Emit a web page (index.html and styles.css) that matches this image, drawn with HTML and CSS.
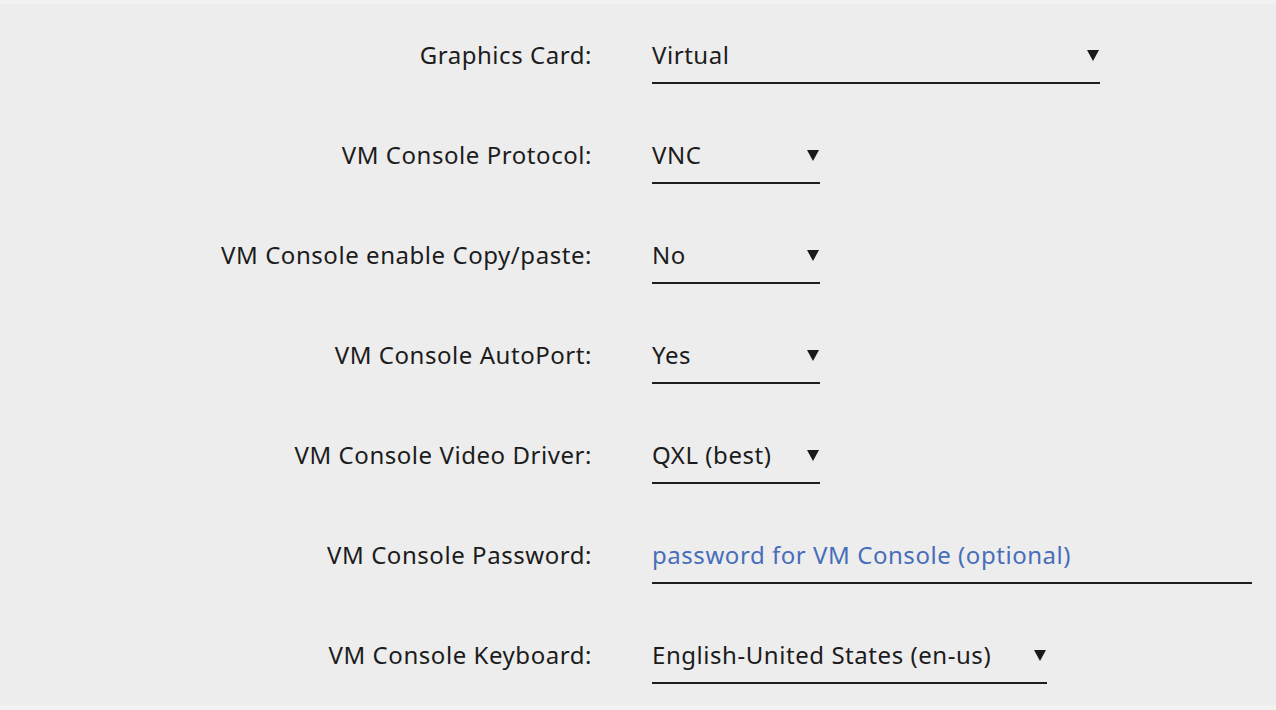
FILE: index.html
```html
<!DOCTYPE html>
<html>
<head>
<meta charset="utf-8">
<link rel="stylesheet" href="styles.css">
</head>
<body>
<div class="panel">
  <div class="row">
    <div class="label">Graphics Card:</div>
    <div class="control select w-graphics"><span>Virtual</span><svg class="caret" viewBox="0 0 12 12"><polygon points="0,1 12,1 6,12"/></svg></div>
  </div>
  <div class="row">
    <div class="label">VM Console Protocol:</div>
    <div class="control select w-short"><span>VNC</span><svg class="caret" viewBox="0 0 12 12"><polygon points="0,1 12,1 6,12"/></svg></div>
  </div>
  <div class="row">
    <div class="label">VM Console enable Copy/paste:</div>
    <div class="control select w-short"><span>No</span><svg class="caret" viewBox="0 0 12 12"><polygon points="0,1 12,1 6,12"/></svg></div>
  </div>
  <div class="row">
    <div class="label">VM Console AutoPort:</div>
    <div class="control select w-short"><span>Yes</span><svg class="caret" viewBox="0 0 12 12"><polygon points="0,1 12,1 6,12"/></svg></div>
  </div>
  <div class="row">
    <div class="label">VM Console Video Driver:</div>
    <div class="control select w-short"><span>QXL (best)</span><svg class="caret" viewBox="0 0 12 12"><polygon points="0,1 12,1 6,12"/></svg></div>
  </div>
  <div class="row">
    <div class="label">VM Console Password:</div>
    <div class="control input w-pass"><span class="placeholder">password for VM Console (optional)</span></div>
  </div>
  <div class="row">
    <div class="label">VM Console Keyboard:</div>
    <div class="control select w-kbd"><span>English-United States (en-us)</span><svg class="caret" viewBox="0 0 12 12"><polygon points="0,1 12,1 6,12"/></svg></div>
  </div>
</div>
</body>
</html>
```
FILE: styles.css
```css
html, body {
  margin: 0;
  padding: 0;
  background: #f2f2f2;
}
body {
  font-family: "Noto Sans", "Open Sans", sans-serif;
  font-size: 24px;
  letter-spacing: 0.55px;
  color: #1c1c1c;
}
.panel {
  margin-top: 4px;
  height: 701px;
  background: #ededed;
  padding-top: 26px;
  box-sizing: border-box;
}
.row {
  display: grid;
  grid-template-columns: 592px auto;
  column-gap: 60px;
  height: 100px;
  align-items: start;
}
.label {
  text-align: right;
  line-height: 50px;
}
.control {
  display: flex;
  align-items: center;
  justify-content: space-between;
  height: 54px;
  padding-bottom: 2px;
  line-height: 50px;
  border-bottom: 2px solid #1e1e1e;
  box-sizing: border-box;
}
.caret {
  width: 12px;
  height: 12px;
  fill: #1a1a1a;
  margin-right: 1px;
}
.w-graphics { width: 448px; }
.w-short { width: 168px; }
.w-kbd { width: 395px; }
.w-pass { width: 600px; }
.placeholder { color: #486dba; }
```
